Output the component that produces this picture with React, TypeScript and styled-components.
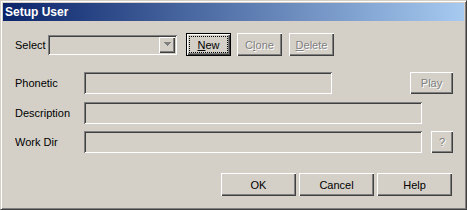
import React from "react";
import styled, { createGlobalStyle, css } from "styled-components";

const GlobalStyle = createGlobalStyle`
	html, body {
		margin: 0;
		padding: 0;
		background: #d4d0c8;
	}
	body {
		font-family: "Liberation Sans", Arial, sans-serif;
		font-size: 11px;
		color: #000;
	}
`;

const raised = css`
	box-shadow: inset 1px 1px #fff, inset -1px -1px #404040,
		inset -2px -2px #808080;
`;

const sunken = css`
	box-shadow: inset 1px 1px #808080, inset -1px -1px #fff,
		inset 2px 2px #404040, inset -2px -2px #d4d0c8;
`;

const App = () => {
	return (
		<>
			<GlobalStyle />
			<Window>
				<TitleBar>Setup User</TitleBar>
				<Body>
					<Row $top={12}>
						<Label $w={33}>Select</Label>
						<Combo>
							<DropButton>
								<svg width="7" height="5" viewBox="0 0 7 5">
									<path d="M1 1h5v1H5v1H4v1H3V3H2V2H1z" fill="#fff" />
									<path d="M0 0h7v1H6v1H5v1H4v1H3V3H2V2H1V1H0z" fill="#808080" />
								</svg>
							</DropButton>
						</Combo>
						<Button $w={45} $h={23} $left={9} $default>
							<Focus>
								<u>N</u>ew
							</Focus>
						</Button>
						<Button $w={45} $h={23} $left={6} $disabled>
							C<u>l</u>one
						</Button>
						<Button $w={45} $h={23} $left={7} $disabled>
							<u>D</u>elete
						</Button>
					</Row>
					<Row $top={16}>
						<Label $w={69}>Phonetic</Label>
						<Field $w={248} />
						<Button $w={43} $h={22} $left="auto" $disabled>
							Play
						</Button>
					</Row>
					<Row $top={8}>
						<Label $w={69}>Description</Label>
						<Field $w={338} />
					</Row>
					<Row $top={7}>
						<Label $w={69}>Work Dir</Label>
						<Field $w={338} />
						<Button $w={22} $h={22} $left={9} $disabled>
							?
						</Button>
					</Row>
					<Footer>
						<Button $w={75} $h={23}>OK</Button>
						<Button $w={75} $h={23} $left={3}>Cancel</Button>
						<Button $w={75} $h={23} $left={3}>Help</Button>
					</Footer>
				</Body>
			</Window>
		</>
	);
};

export default App;

const Window = styled.div`
	box-sizing: border-box;
	width: 467px;
	height: 210px;
	padding: 2px;
	background: #d4d0c8;
	border: 1px solid;
	border-color: #d4d0c8 #404040 #404040 #d4d0c8;
	box-shadow: inset 1px 1px #fff, inset -1px -1px #808080;
	display: flex;
	flex-direction: column;
`;

const TitleBar = styled.div`
	height: 18px;
	flex-shrink: 0;
	display: flex;
	align-items: center;
	padding-left: 2px;
	background: linear-gradient(to right, #0a246a, #a6caf0);
	color: #fff;
	font-weight: bold;
	font-size: 12px;
`;

const Body = styled.div`
	display: flex;
	flex-direction: column;
	padding: 0 11px 0 12px;
`;

const Row = styled.div<{ $top: number }>`
	display: flex;
	align-items: center;
	margin-top: ${(p) => p.$top}px;
`;

const Footer = styled.div`
	display: flex;
	justify-content: flex-end;
	margin-top: 20px;
	padding-right: 1px;
`;

const Label = styled.span<{ $w: number }>`
	width: ${(p) => p.$w}px;
	flex-shrink: 0;
	white-space: nowrap;
`;

const Field = styled.div<{ $w: number }>`
	box-sizing: border-box;
	width: ${(p) => p.$w}px;
	height: 22px;
	flex-shrink: 0;
	background: #d4d0c8;
	${sunken}
`;

const Combo = styled.div`
	box-sizing: border-box;
	width: 129px;
	height: 20px;
	padding: 2px;
	flex-shrink: 0;
	display: flex;
	justify-content: flex-end;
	background: #d4d0c8;
	${sunken}
`;

const DropButton = styled.div`
	width: 16px;
	height: 16px;
	display: flex;
	align-items: center;
	justify-content: center;
	background: #d4d0c8;
	${raised}
`;

const Button = styled.div<{
	$w: number;
	$h: number;
	$left?: number | "auto";
	$default?: boolean;
	$disabled?: boolean;
}>`
	box-sizing: border-box;
	width: ${(p) => p.$w}px;
	height: ${(p) => p.$h}px;
	flex-shrink: 0;
	margin-left: ${(p) =>
		p.$left === "auto" ? "auto" : `${p.$left ?? 0}px`};
	display: flex;
	align-items: center;
	justify-content: center;
	background: #d4d0c8;
	font-size: 11px;
	${raised}
	${(p) =>
		p.$default &&
		css`
			border: 1px solid #000;
			padding: 2px;
		`}
	${(p) =>
		p.$disabled &&
		css`
			color: #808080;
			text-shadow: 1px 1px 0 #fff;
		`}
	u {
		text-decoration: underline;
	}
`;

const Focus = styled.span`
	box-sizing: border-box;
	flex: 1;
	align-self: stretch;
	display: flex;
	align-items: center;
	justify-content: center;
	border: 1px dotted #000;
`;
